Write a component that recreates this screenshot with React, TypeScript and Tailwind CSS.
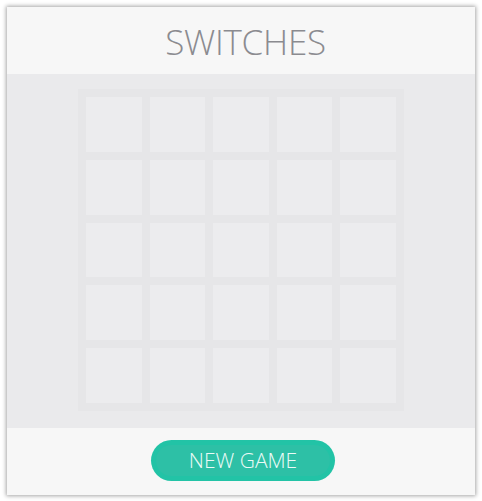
import React from "react";

const cells = Array.from({ length: 25 }, (_, i) => i);

const App: React.FC = () => {
  return (
    <div className="w-[482px] h-[501px] bg-white p-[7px] font-['Open_Sans',sans-serif]">
      <div className="w-[468px] h-[488px] flex flex-col bg-[#f7f7f7] shadow-[0_0_4px_1px_rgba(0,0,0,0.35)]">
        {/* Header */}
        <div className="h-[67px] flex items-center justify-center pl-[9px] pt-[2px]">
          <h1 className="text-[35px] font-light tracking-[-0.3px] text-[#8b8b90] leading-none">
            SWITCHES
          </h1>
        </div>

        {/* Board */}
        <div className="h-[354px] bg-[#eaeaec] flex justify-center pt-[15px]">
          <div className="w-[326px] h-[322px] bg-[#e6e6e8] p-2 grid grid-cols-5 grid-rows-5 gap-2">
            {cells.map((i) => (
              <div key={i} className="bg-[#ececee]" />
            ))}
          </div>
        </div>

        {/* Footer */}
        <div className="flex-1 flex justify-center pt-[12px] pl-[4px]">
          <button className="w-[184px] h-[41px] rounded-full bg-[#22c3a6] p-[5px]">
            <span className="flex w-full h-full items-center justify-center rounded-full bg-[#2dc0a6] text-[21px] font-light text-[#eafaf6] leading-none">
              NEW GAME
            </span>
          </button>
        </div>
      </div>
    </div>
  );
};

export default App;
